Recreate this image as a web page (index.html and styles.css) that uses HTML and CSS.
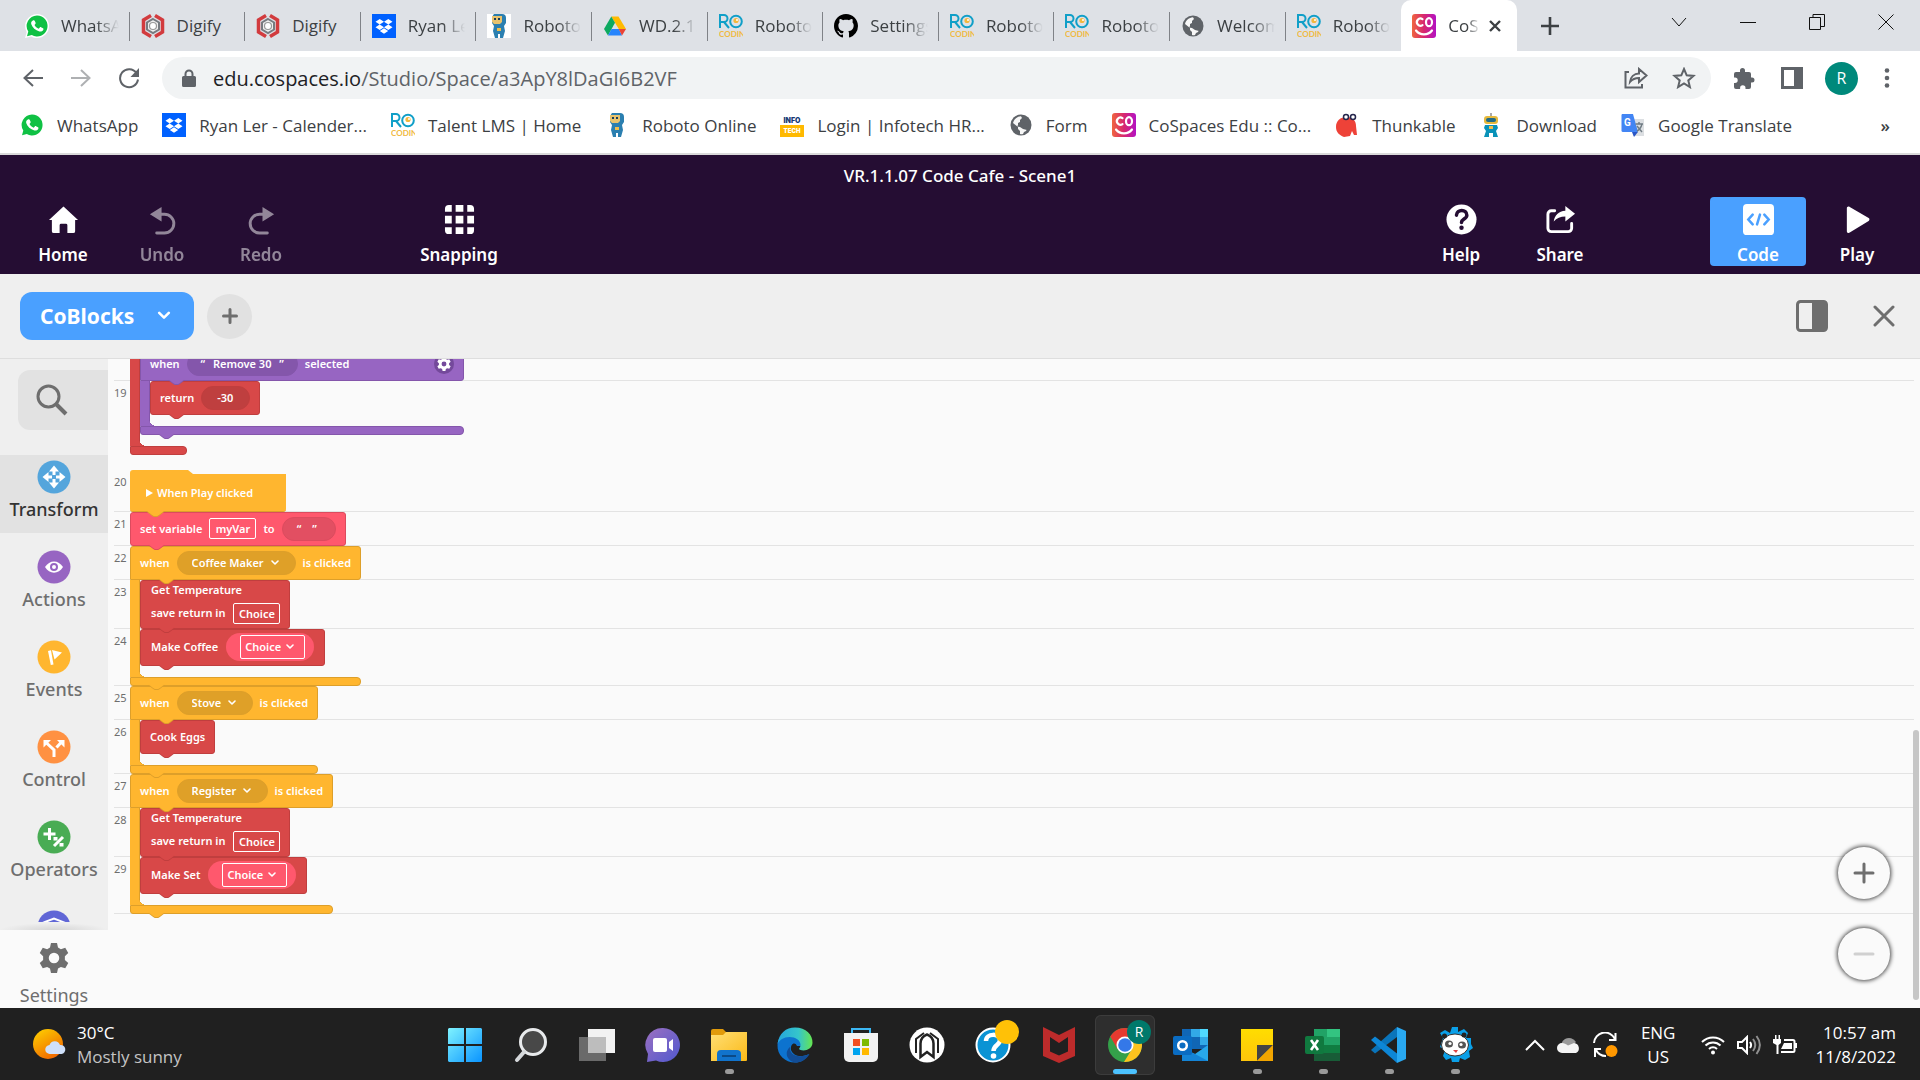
FILE: index.html
```html
<!DOCTYPE html>
<html lang="en">
<head>
<meta charset="utf-8">
<meta name="viewport" content="width=device-width, initial-scale=1">
<title>CoSpaces Edu</title>
<link rel="stylesheet" href="styles.css">
</head>
<body>
<svg class="defs" aria-hidden="true">
  <defs>
    <linearGradient id="g-co" x1="0" x2="1"><stop offset="0" stop-color="#f0653f"/><stop offset=".5" stop-color="#d7276f"/><stop offset="1" stop-color="#b312c4"/></linearGradient>
    <linearGradient id="g-sun" x1="0" y1="0" x2=".6" y2="1"><stop offset="0" stop-color="#ffd400"/><stop offset="1" stop-color="#f06a00"/></linearGradient>
    <linearGradient id="g-win" x1="0" y1="0" x2="1" y2="1"><stop offset="0" stop-color="#7ff3ff"/><stop offset="1" stop-color="#0a94ff"/></linearGradient>
    <linearGradient id="g-chat" x1="0" y1="0" x2="1" y2="1"><stop offset="0" stop-color="#9c70c0"/><stop offset="1" stop-color="#5058cf"/></linearGradient>
    <linearGradient id="g-fold" x1="0" y1="0" x2="1" y2="1"><stop offset="0" stop-color="#ffdf75"/><stop offset="1" stop-color="#fbb917"/></linearGradient>
    <linearGradient id="g-edge" x1="0" x2="1"><stop offset="0" stop-color="#25a5dc"/><stop offset=".6" stop-color="#35c5cb"/><stop offset="1" stop-color="#66e650"/></linearGradient>
    <linearGradient id="g-note" x1="0" y1="0" x2="0" y2="1"><stop offset="0" stop-color="#ffdd00"/><stop offset="1" stop-color="#ffc50b"/></linearGradient>
  </defs>
</svg>
<svg class="symbols" aria-hidden="true">
  <symbol id="i-whatsapp" viewBox="0 0 24 24"><path fill="#fff" d="M12 0a12 12 0 0 1 0 24c-2 0-4-.5-5.800-1.500L0 24l1.700-6A12 12 0 0 1 12 0z"/><path fill="#0fc144" d="M12 1.500a10.500 10.500 0 1 1-5.200 19.600L2 22.300l1.300-4.700A10.500 10.500 0 0 1 12 1.500z"/><path fill="#fff" d="M8.200 6.300c.5-.3 1.200-.2 1.500.4l.9 2c.2.500 0 1-.3 1.300l-.8 1c1 1.800 2.300 3 4.200 3.800l1.100-1.300c.3-.4.8-.5 1.200-.3l2 1c.5.300.6.700.4 1.300-.5 1.700-2.400 2.400-4 2-4-1.100-7-3.900-8.200-7.500-.4-1.600.5-3 2-3.700z"/></symbol>
  <symbol id="i-digify" viewBox="0 0 24 24"><path fill="none" stroke="#d23b3e" stroke-width="3.500" d="M10 1.500 2.500 6v12l7.500 4.500M14 1.500 21.500 6v12L14 22.500"/><path fill="#eee" stroke="#777b80" stroke-width="2" d="m12 5 6 3.500v7L12 19l-6-3.500v-7z"/><circle cx="12" cy="12" r="3.500" fill="#fff" stroke="#999" stroke-width="1.200"/></symbol>
  <symbol id="i-dropbox" viewBox="0 0 24 24"><path fill="#0061ff" d="M0 0h24v24H0z"/><path fill="#fff" d="m7.700 5 4.300 2.700-4.300 2.700-4.200-2.700zm8.600 0 4.200 2.700-4.200 2.700L12 7.700zM7.700 10.500l4.300 2.700-4.300 2.700-4.200-2.700zm8.600 0 4.200 2.700-4.200 2.700-4.300-2.700zM12 14.300l4.200 2.700-4.200 2.700L7.800 17z"/></symbol>
  <symbol id="i-robot" viewBox="0 0 24 24"><path fill="#2b7fb0" d="M7 0h8a4 4 0 0 1 4 4v5l-2 3H7L5 9V3z"/><path fill="#e8c36e" d="M5 2h10v6l-2 2H7L5 8z"/><path fill="#183d58" d="M7 4h2v2H7zm4 0h2v2h-2z"/><path fill="#2b7fb0" d="M7 12h10l1 5-2 7h-3v-4h-2v4H8l-2-7z"/><path fill="#f0be4c" d="M10 14h4v3h-4z"/></symbol>
  <symbol id="i-robot2" viewBox="0 0 24 24"><path stroke="#555" d="M12 0v4"/><rect x="5" y="3" width="14" height="8" rx="3" fill="#e6b93c"/><rect x="7" y="5" width="10" height="4" rx="2" fill="#246b85"/><path fill="#0992b8" d="M6 12h12l1 3-2 3 2 6h-5v-4h-4v4H5l2-6-2-3z"/><path fill="#f0be4c" d="M10 13h4v3h-4z"/></symbol>
  <symbol id="i-drive" viewBox="0 0 24 24"><path fill="#ffba00" d="M8.300 2.500h7.200L23 15h-7.200z"/><path fill="#0da960" d="M8.300 2.500 12 8.800 5 21.500 1 15z"/><path fill="#2684fc" d="M8.500 15h7.300l3.200 6.500H5z"/><path fill="#ea4335" d="M15.700 15H23l-4 6.500z"/></symbol>
  <symbol id="i-ro" viewBox="0 0 24 24"><path fill="none" stroke="#109fc8" stroke-width="2" d="M1 14V1h4a3.500 3.500 0 0 1 0 7H1m4 0 5 6"/><circle cx="17" cy="7.500" r="5.800" fill="none" stroke="#109fc8" stroke-width="2"/><circle cx="17" cy="6.500" r="2.600" fill="#f3b83d"/><circle cx="18" cy="6" r="1" fill="#fff"/><text x="0" y="23" font-family="Lato, sans-serif" font-size="8" font-weight="700" fill="#f0b93f">CODIN</text></symbol>
  <symbol id="i-github" viewBox="0 0 16 16"><path d="M8 0C3.580 0 0 3.580 0 8c0 3.540 2.290 6.530 5.470 7.590.4.070.55-.17.55-.38 0-.19-.01-.82-.01-1.490-2.010.37-2.530-.49-2.690-.94-.09-.23-.48-.94-.82-1.130-.28-.15-.68-.52-.01-.53.63-.01 1.080.58 1.230.82.720 1.210 1.870.87 2.330.66.070-.52.280-.87.510-1.070-1.780-.2-3.640-.89-3.640-3.950 0-.87.310-1.590.82-2.150-.08-.2-.36-1.020.08-2.120 0 0 .67-.21 2.200.82.640-.18 1.320-.27 2-.27s1.360.09 2 .27c1.530-1.040 2.200-.82 2.200-.82.440 1.100.16 1.920.08 2.120.51.560.82 1.270.82 2.150 0 3.070-1.870 3.750-3.650 3.950.29.250.54.730.54 1.480 0 1.070-.01 1.930-.01 2.200 0 .21.150.46.550.38A8.010 8.010 0 0 0 16 8c0-4.420-3.580-8-8-8z"/></symbol>
  <symbol id="i-globe" viewBox="0 0 24 24"><circle cx="12" cy="12" r="10.500" fill="#5f6368"/><path fill="#fff" d="M4 10c1-4 4-6.500 8-6.800l1 1.800-2 2v2l-2 1v2h3l2 2h3l1 2-1 2-2 1-1 2c-1 .3-2 .2-3 0v-3l-2-2v-2z" opacity=".95"/><path fill="#5f6368" d="m14 5 3 1v3l-3 1 1 2 4-1 1 3-2 3-4-1-3-2-3-.500z"/></symbol>
  <symbol id="i-info" viewBox="0 0 24 24"><path fill="#ffb900" d="M0 12h24v12H0z"/><text x="12" y="10" text-anchor="middle" font-family="Inter, sans-serif" font-size="7" font-weight="900" fill="#173a75">INFO</text><text x="12" y="20" text-anchor="middle" font-family="Inter, sans-serif" font-size="6" font-weight="900" fill="#fff">TECH</text></symbol>
  <symbol id="i-co" viewBox="0 0 24 24"><rect width="24" height="24" rx="3" fill="url(#g-co)"/><path fill="none" stroke="#fff" stroke-width="2.200" stroke-linecap="round" d="M10.500 5.200a3.600 3.600 0 1 0 0 6M4 16.500c4 5.200 12 5.200 16 0"/><ellipse cx="17" cy="8.200" rx="3" ry="4" fill="none" stroke="#fff" stroke-width="2.200"/></symbol>
  <symbol id="i-thunk" viewBox="0 0 24 24"><path fill="#ee4238" d="M1 14C1 8 5 4 12 4c6 0 9 4 9 9l1 9h-3l-2-4-2 5-6 1C4 22 1 19 1 14z"/><circle cx="11" cy="4" r="2.500" fill="#fff" stroke="#25264c" stroke-width="1.500"/><circle cx="18" cy="4" r="2.500" fill="#fff" stroke="#25264c" stroke-width="1.500"/></symbol>
  <symbol id="i-translate" viewBox="0 0 24 24"><path fill="#dcdfe2" d="M10 6h13v17H12z"/><path fill="#4285f4" d="M1 1h11l5 18H2a1.500 1.500 0 0 1-1.500-1.500V2z"/><path fill="#2a56c6" d="M11 19h6l-4 5z"/><text x="3" y="13" font-family="Roboto, sans-serif" font-size="10" font-weight="700" fill="#fff">G</text><path fill="none" stroke="#6f7b83" stroke-width="1.400" d="M14.500 11H22m-4-2v2m3 0c-1 4-3 6-5 7m0-5 5 6"/></symbol>
  <symbol id="i-chev" viewBox="0 0 10 6"><path fill="none" stroke="currentColor" stroke-width="1.600" stroke-linecap="round" stroke-linejoin="round" d="m2 1 3 3 3-3"/></symbol>
  <symbol id="i-gear" viewBox="0 0 24 24"><path fill="currentColor" fill-rule="evenodd" d="M9.600 0h4.800l.8 3.600 2.300 1.300L21 3.800l2.400 4.200-2.700 2.500v3l2.700 2.500L21 20.200l-3.500-1.100-2.300 1.300-.8 3.600H9.600l-.8-3.600-2.300-1.300L3 20.200.6 16l2.700-2.500v-3L.6 8 3 3.800l3.500 1.100 2.300-1.300zM12 7.800a4.200 4.200 0 1 0 0 8.400 4.200 4.200 0 0 0 0-8.400z"/></symbol>
</svg>

<header class="browser">
  <div class="tabstrip">
    <nav class="tabs" aria-label="Tabs">
      <a class="tab" href="#"><svg class="fav"><use href="#i-whatsapp"/></svg><span class="tab-label">WhatsApp</span></a>
      <a class="tab" href="#"><svg class="fav"><use href="#i-digify"/></svg><span class="tab-label whole">Digify</span></a>
      <a class="tab" href="#"><svg class="fav"><use href="#i-digify"/></svg><span class="tab-label whole">Digify</span></a>
      <a class="tab" href="#"><svg class="fav"><use href="#i-dropbox"/></svg><span class="tab-label">Ryan Ler</span></a>
      <a class="tab" href="#"><svg class="fav fav-white"><use href="#i-robot"/></svg><span class="tab-label">Roboto</span></a>
      <a class="tab" href="#"><svg class="fav"><use href="#i-drive"/></svg><span class="tab-label">WD.2.1.0</span></a>
      <a class="tab" href="#"><svg class="fav"><use href="#i-ro"/></svg><span class="tab-label">Roboto</span></a>
      <a class="tab" href="#"><svg class="fav"><use href="#i-github"/></svg><span class="tab-label">Settings</span></a>
      <a class="tab" href="#"><svg class="fav"><use href="#i-ro"/></svg><span class="tab-label">Roboto</span></a>
      <a class="tab" href="#"><svg class="fav"><use href="#i-ro"/></svg><span class="tab-label">Roboto</span></a>
      <a class="tab" href="#"><svg class="fav"><use href="#i-globe"/></svg><span class="tab-label">Welcome</span></a>
      <a class="tab" href="#"><svg class="fav"><use href="#i-ro"/></svg><span class="tab-label">Roboto</span></a>
      <div class="tab tab-active"><svg class="fav"><use href="#i-co"/></svg><span class="tab-label">CoSpaces</span><button class="tab-close" aria-label="Close tab"><svg width="14" height="14" viewBox="0 0 14 14"><path fill="none" stroke="#3c4043" stroke-width="2.400" d="m2 2 10 10M12 2 2 12"/></svg></button></div>
    </nav>
    <button class="new-tab" aria-label="New tab"><svg width="18" height="18" viewBox="0 0 18 18"><path fill="none" stroke="#3c4043" stroke-width="2.600" d="M9 0v18M0 9h18"/></svg></button>
    <div class="window-buttons">
      <button aria-label="Search tabs"><svg width="16" height="16" viewBox="0 0 16 16"><path d="m1 4 7 8 7-8"/></svg></button>
      <button aria-label="Minimise"><svg width="16" height="16" viewBox="0 0 16 16"><path d="M0 8.500h16"/></svg></button>
      <button aria-label="Restore"><svg width="16" height="16" viewBox="0 0 16 16"><path d="M.5 3.500h11v12H.5zM4 3V.5h11.500v12H12"/></svg></button>
      <button aria-label="Close"><svg width="16" height="16" viewBox="0 0 16 16"><path d="m.5.5 15 15M15.500.5l-15 15"/></svg></button>
    </div>
  </div>

  <div class="toolbar">
    <div class="nav-buttons">
      <button aria-label="Back"><svg width="22" height="20" viewBox="0 0 22 20"><path d="M21 10H3m8-8-8.500 8 8.500 8"/></svg></button>
      <button aria-label="Forward" class="dim"><svg width="22" height="20" viewBox="0 0 22 20"><path d="M1 10h18M11 2l8.500 8-8.500 8"/></svg></button>
      <button aria-label="Reload"><svg width="22" height="22" viewBox="0 0 22 22"><path d="M18.500 6A9 9 0 1 0 20 12.500"/><path class="solid" d="M21 1v9h-8.500z"/></svg></button>
    </div>
    <form class="omnibox">
      <svg width="14" height="18" viewBox="0 0 14 18"><path fill="#5f6368" d="M1.500 7h11A1.500 1.500 0 0 1 14 8.500v8a1.500 1.500 0 0 1-1.500 1.500h-11A1.500 1.500 0 0 1 0 16.500v-8A1.500 1.500 0 0 1 1.500 7z"/><path fill="none" stroke="#5f6368" stroke-width="2" d="M3.500 8V5a3.500 3.500 0 0 1 7 0v3"/></svg>
      <a class="url" href="#"><b>edu.cospaces.io</b>/Studio/Space/a3ApY8lDaGI6B2VF</a>
      <button type="button" aria-label="Share page"><svg width="24" height="22" viewBox="0 0 24 22"><path fill="none" stroke="#5f6368" stroke-width="2" d="M5 5H1.500v15.500H18V17M6 15c.5-5 4-8.500 9-8.500V2l7.500 6.500-7.500 6.500v-4C11 11 8 12.500 6 15z"/></svg></button>
      <button type="button" aria-label="Bookmark"><svg width="24" height="22" viewBox="0 0 24 22"><path fill="none" stroke="#5f6368" stroke-width="2" d="m12 2 2.700 6.300 6.800.6-5.200 4.500 1.600 6.700L12 16.500l-5.900 3.600 1.600-6.700-5.200-4.500 6.800-.6z"/></svg></button>
    </form>
    <div class="ext-buttons">
      <button aria-label="Extensions"><svg width="22" height="22" viewBox="0 0 22 22"><path fill="#5f6368" d="M7 5V3.500a2.500 2.500 0 0 1 5 0V5h4a2 2 0 0 1 2 2v3.500h1a2.500 2.500 0 0 1 0 5h-1V20a2 2 0 0 1-2 2h-3.500v-1a2.700 2.700 0 0 0-5.400 0v1H3a2 2 0 0 1-2-2v-4h1a2.700 2.700 0 0 0 0-5.400H1V7a2 2 0 0 1 2-2z"/></svg></button>
      <button aria-label="Side panel"><svg width="22" height="22" viewBox="0 0 22 22"><path fill="#5f6368" fill-rule="evenodd" d="M0 0h22v22H0zm3 3v16h10V3z"/></svg></button>
      <button aria-label="Profile" class="avatar">R</button>
      <button aria-label="Menu"><svg width="6" height="20" viewBox="0 0 6 20"><g fill="#5f6368"><circle cx="3" cy="2.500" r="2.300"/><circle cx="3" cy="10" r="2.300"/><circle cx="3" cy="17.500" r="2.300"/></g></svg></button>
    </div>
  </div>

  <nav class="bookmarks" aria-label="Bookmarks">
    <a href="#"><svg class="fav"><use href="#i-whatsapp"/></svg>WhatsApp</a>
    <a href="#"><svg class="fav"><use href="#i-dropbox"/></svg>Ryan Ler - Calender...</a>
    <a href="#"><svg class="fav"><use href="#i-ro"/></svg>Talent LMS | Home</a>
    <a href="#"><svg class="fav"><use href="#i-robot"/></svg>Roboto Online</a>
    <a href="#"><svg class="fav"><use href="#i-info"/></svg>Login | Infotech HR...</a>
    <a href="#"><svg class="fav"><use href="#i-globe"/></svg>Form</a>
    <a href="#"><svg class="fav"><use href="#i-co"/></svg>CoSpaces Edu :: Co...</a>
    <a href="#"><svg class="fav"><use href="#i-thunk"/></svg>Thunkable</a>
    <a href="#"><svg class="fav"><use href="#i-robot2"/></svg>Download</a>
    <a href="#"><svg class="fav"><use href="#i-translate"/></svg>Google Translate</a>
    <button class="more" aria-label="More bookmarks">»</button>
  </nav>
</header>

<section class="appbar">
  <h1>VR.1.1.07 Code Cafe - Scene1</h1>
  <div class="actions">
    <button class="action"><svg viewBox="0 0 32 32"><path d="M16 2.500 31 16.500h-3V28a2 2 0 0 1-2 2h-6v-8a1.500 1.500 0 0 0-1.500-1.500h-5A1.500 1.500 0 0 0 12 22v8H6a2 2 0 0 1-2-2V16.500H1z"/></svg>Home</button>
    <button class="action" disabled><svg viewBox="0 0 32 32"><path d="M3 10.500 15 3v15z"/><path class="line" d="M13 10.500h5a9.700 9.700 0 0 1 0 19.400H10"/></svg>Undo</button>
    <button class="action" disabled><svg viewBox="0 0 32 32"><path d="M29 10.500 17 3v15z"/><path class="line" d="M19 10.500h-5a9.700 9.700 0 0 0 0 19.400h8"/></svg>Redo</button>
    <button class="action after-gap"><svg viewBox="0 0 32 32"><path d="M5 1h3v7H1V5a4 4 0 0 1 4-4zm7 0h8v7h-8zm12 0h3a4 4 0 0 1 4 4v3h-7zM1 12h7v8H1zm11 0h8v8h-8zm12 0h7v8h-7zM1 24h7v7H5a4 4 0 0 1-4-4zm11 0h8v7h-8zm12 0h7v3a4 4 0 0 1-4 4h-3z"/></svg>Snapping</button>
    <span class="spacer"></span>
    <button class="action"><svg viewBox="0 0 32 32"><circle cx="16" cy="16" r="15.500"/><path fill="none" stroke="#250d33" stroke-width="3.600" stroke-linecap="round" d="M10.800 11.500c.3-6.500 10.700-6.500 10.700 0 0 4-5.500 4-5.500 7.500"/><circle cx="16" cy="24.500" r="2.300" fill="#250d33"/></svg>Help</button>
    <button class="action"><svg viewBox="0 0 32 32"><path class="line" d="M10 7H6.500A3.500 3.500 0 0 0 3 10.500V25a3.500 3.500 0 0 0 3.500 3.500H24a3.500 3.500 0 0 0 3.500-3.500v-5"/><path d="M21 2v5C14 7.500 10 12 9 18c3-3.500 7-5 12-5v5l10-8z"/></svg>Share</button>
    <button class="action action-on after-gap"><svg viewBox="0 0 32 32"><rect x="0" y="0" width="32" height="32" rx="4"/><path fill="none" stroke="#4aa0ff" stroke-width="2.600" stroke-linecap="round" d="m10 11-4.500 5 4.500 5M22 11l4.500 5-4.500 5M17.500 11l-3 10"/></svg>Code</button>
    <button class="action"><svg viewBox="0 0 32 32"><path d="M5 4.500C5 2.700 6.500 2 8 3l19.500 11.500a1.800 1.800 0 0 1 0 3L8 29.500c-1.500 1-3 0-3-1.500z"/></svg>Play</button>
  </div>
</section>

<section class="scriptbar">
  <button class="script-pick">CoBlocks<svg width="16" height="10"><use href="#i-chev"/></svg></button>
  <button class="script-add" aria-label="Add script"><svg width="16" height="16" viewBox="0 0 16 16"><path fill="none" stroke="#6e6e6e" stroke-width="3" stroke-linecap="round" d="M8 1.500v13M1.500 8h13"/></svg></button>
  <span class="spacer"></span>
  <button aria-label="Split view"><svg width="32" height="32" viewBox="0 0 32 32"><rect x="1.500" y="1.500" width="29" height="29" rx="3" fill="none" stroke="#6e6e6e" stroke-width="3"/><path fill="#6e6e6e" d="M16 1h12a3 3 0 0 1 3 3v24a3 3 0 0 1-3 3H16z"/></svg></button>
  <button aria-label="Close editor"><svg width="22" height="22" viewBox="0 0 22 22"><path fill="none" stroke="#6e6e6e" stroke-width="3" stroke-linecap="round" d="m2 2 18 18M20 2 2 20"/></svg></button>
</section>

<main class="editor">
  <aside class="palette">
    <button class="search" aria-label="Search blocks"><svg width="32" height="32" viewBox="0 0 32 32"><g fill="none" stroke="#6e6e6e"><circle cx="12.500" cy="12.500" r="10.500" stroke-width="3"/><path stroke-width="4" d="m20 20 10 10"/></g></svg></button>
    <nav class="categories" aria-label="Block categories">
      <a class="category selected" href="#"><svg viewBox="0 0 34 34"><circle cx="17" cy="17" r="16.500" fill="#54a5dc"/><path fill="#fff" d="m17 5.500 5 6h-3.500V15h-3v-3.500H12zM28.500 17l-6 5v-3.500H19v-3h3.500V12zM17 28.500l-5-6h3.500V19h3v3.500H22zM5.500 17l6-5v3.500H15v3h-3.500V22z"/></svg>Transform</a>
      <a class="category" href="#"><svg viewBox="0 0 34 34"><circle cx="17" cy="17" r="16.500" fill="#9765c2"/><path fill="#fff" d="M8 17c4.500-7.500 13.500-7.500 18 0-4.500 7.500-13.500 7.500-18 0z"/><circle cx="17" cy="17" r="3" fill="#fff" stroke="#9765c2" stroke-width="2"/></svg>Actions</a>
      <a class="category" href="#"><svg viewBox="0 0 34 34"><circle cx="17" cy="17" r="16.500" fill="#ffb62f"/><path fill="#fff" d="m11 11 3-.7 2.500 14.200-2.700.5zM15 10l10 2.500-7.500 7z"/></svg>Events</a>
      <a class="category" href="#"><svg viewBox="0 0 34 34"><circle cx="17" cy="17" r="16.500" fill="#ff9142"/><path fill="none" stroke="#fff" stroke-width="3" d="M17 27v-7l-8-7.500m10.500 5 5-5.500"/><path fill="#fff" d="M6.500 10H14l-7.500 7.500zM20 10h7.500v7.500z"/></svg>Control</a>
      <a class="category" href="#"><svg viewBox="0 0 34 34"><circle cx="17" cy="17" r="16.500" fill="#49ac54"/><path fill="none" stroke="#fff" stroke-width="3" d="M12.500 8v12M6.500 14h12m-1.500 12 9-9"/><path fill="#fff" d="M16.500 17h4v3.500h-4zm6 6h4v3.500h-4z"/></svg>Operators</a>
      <a class="category" href="#" aria-label="More blocks"><svg viewBox="0 0 34 34"><circle cx="17" cy="17" r="16.500" fill="#6066d6"/><path fill="none" stroke="#fff" stroke-width="2" d="m8 12 9-3.500 9 3.500-9 4zv9l9 4 9-4v-9"/></svg></a>
    </nav>
    <a class="settings" href="#"><svg width="30" height="30"><use href="#i-gear"/></svg>Settings</a>
  </aside>

  <section class="canvas" aria-label="Script">
    <div class="program">
      <ol class="lines" start="18">
        <li class="h34"></li>
        <li class="h89">19</li>
        <li class="h42 plain">20</li>
        <li class="h34">21</li>
        <li class="h34">22</li>
        <li class="h49">23</li>
        <li class="h57">24</li>
        <li class="h34">25</li>
        <li class="h54">26</li>
        <li class="h34">27</li>
        <li class="h49">28</li>
        <li class="h57">29</li>
        <li></li>
      </ol>

      <div class="stacks">
        <div class="stack">
          <div class="wrap red tail">
            <div class="wrap-body">
              <div class="wrap purple">
                <div class="row head wide">when <span class="pill quoted"><i>“</i><input class="bare" aria-label="Option" value="Remove 30"><i>”</i></span> selected<button class="gear" aria-label="Block options"><svg width="14" height="14"><use href="#i-gear"/></svg></button></div>
                <div class="wrap-body">
                  <div class="block row red knob">return <span class="pill"><input class="bare number" aria-label="Return value" value="-30"></span></div>
                </div>
                <div class="foot knob"></div>
              </div>
            </div>
            <div class="foot"></div>
          </div>
        </div>

        <div class="stack">
          <div class="hat-wrap yellow knob"><div class="hat"><svg width="7" height="8" viewBox="0 0 7 8"><path fill="#fff" d="M0 0v8l7-4z"/></svg>When Play clicked</div></div>
          <div class="block row pink knob">set variable <input class="field" aria-label="Variable" value="myVar"> to <span class="pill empty"><i>“</i><i>”</i></span></div>
          <div class="wrap yellow">
            <div class="row head">when <label class="pill"><select aria-label="Item"><option>Coffee Maker</option></select><svg width="10" height="6"><use href="#i-chev"/></svg></label> is clicked</div>
            <div class="wrap-body">
              <div class="block call red knob"><div>Get Temperature</div><div class="row">save return in <input class="field" aria-label="Variable" value="Choice"></div></div>
              <div class="block row tall red knob">Make Coffee <label class="value"><span class="boxed"><select aria-label="Variable"><option>Choice</option></select><svg width="10" height="6"><use href="#i-chev"/></svg></span></label></div>
            </div>
            <div class="foot knob"></div>
          </div>
          <div class="wrap yellow">
            <div class="row head">when <label class="pill"><select aria-label="Item"><option>Stove</option></select><svg width="10" height="6"><use href="#i-chev"/></svg></label> is clicked</div>
            <div class="wrap-body">
              <div class="block row red knob">Cook Eggs</div>
            </div>
            <div class="foot knob"></div>
          </div>
          <div class="wrap yellow">
            <div class="row head">when <label class="pill"><select aria-label="Item"><option>Register</option></select><svg width="10" height="6"><use href="#i-chev"/></svg></label> is clicked</div>
            <div class="wrap-body">
              <div class="block call red knob"><div>Get Temperature</div><div class="row">save return in <input class="field" aria-label="Variable" value="Choice"></div></div>
              <div class="block row tall red knob">Make Set <label class="value"><span class="boxed"><select aria-label="Variable"><option>Choice</option></select><svg width="10" height="6"><use href="#i-chev"/></svg></span></label></div>
            </div>
            <div class="foot knob"></div>
          </div>
        </div>
      </div>
    </div>
    <div class="zoom">
      <button aria-label="Zoom in"><svg width="22" height="22" viewBox="0 0 22 22"><path fill="none" stroke="#6e6e6e" stroke-width="3" stroke-linecap="round" d="M11 2v18M2 11h18"/></svg></button>
      <button aria-label="Zoom out"><svg width="22" height="22" viewBox="0 0 22 22"><path fill="none" stroke="#d0d0d0" stroke-width="3" stroke-linecap="round" d="M2 11h18"/></svg></button>
    </div>
    <div class="scroll-thumb"></div>
  </section>
</main>

<footer class="taskbar">
  <button class="weather"><svg width="34" height="32" viewBox="0 0 34 32"><circle cx="15" cy="15" r="15" fill="url(#g-sun)"/><path fill="#cfe0fa" d="M17 25a4.500 4.500 0 0 1-.5-9 5.500 5.500 0 0 1 10.500 0 4.500 4.500 0 0 1 1.500 9z"/></svg><span>30°C<small>Mostly sunny</small></span></button>
  <div class="apps">
    <button aria-label="Start"><svg viewBox="0 0 36 36"><path fill="url(#g-win)" d="M2 1h15v16H1V2zm17 0h15l1 1v15H19zM1 19h16v16H2l-1-1zm18 0h16v15l-1 1H19z"/></svg></button>
    <button aria-label="Search"><svg viewBox="0 0 36 36"><circle cx="20" cy="15" r="12.500" fill="#484848" stroke="#e8eaec" stroke-width="3"/><path stroke="#d5d8db" stroke-width="4" stroke-linecap="round" d="m11 25-7 8"/></svg></button>
    <button aria-label="Task view"><svg viewBox="0 0 36 36"><path fill="#f2f2f2" d="M9 2h27v24H9z"/><path fill="#6a6a6a" d="M0 10h9v16h18v8H0z"/><path fill="#bdbdbd" d="M9 10h18v16H9z"/></svg></button>
    <button aria-label="Chat"><svg viewBox="0 0 36 36"><path fill="url(#g-chat)" d="M18 1a17 17 0 1 1-7 32.500L2 35l1-8A17 17 0 0 1 18 1z"/><rect x="8" y="11" width="14" height="14" rx="2" fill="#fff"/><path fill="#fff" d="m24 15 4-3v12l-4-3z"/></svg></button>
    <button aria-label="File Explorer" class="open"><svg viewBox="0 0 36 36"><path fill="#e09a0b" d="M0 4a2 2 0 0 1 2-2h10l4 4v6H0z"/><path fill="url(#g-fold)" d="M0 8h12l3-3h21v28a1 1 0 0 1-1 1H0z"/><path fill="#1173cc" d="M6 34V27a4 4 0 0 1 4-4h16a4 4 0 0 1 4 4v7z"/><path stroke="#0b4a87" stroke-width="2" d="M11 29h14"/></svg></button>
    <button aria-label="Edge"><svg viewBox="0 0 36 36"><path fill="#0d73cf" d="M.5 18C1 8 8 5 16 8c6 2 9 6 8 11h-4c-2-5-7-2-6 4 2 6 10 8 18 4-3 6-9 8.500-14 8.500C8 35.500 0 28 .5 18z"/><path fill="#124d96" d="M13 20c-1 8 8 12 19.500 7-3 6-9 8.500-14 8.500-8-1-12-10-5.500-15.500z"/><path fill="url(#g-edge)" d="M.5 17C2 6 9 .5 18 .5 29 .5 36 8 35.500 16c-.4 6-7 8.500-12 7-3-1 0-2 0-5 0-5-5-8-11-8S2.500 13 .5 17z"/></svg></button>
    <button aria-label="Store"><svg viewBox="0 0 36 36"><path fill="none" stroke="#3cb8f5" stroke-width="2" d="M9 7V2h18v5"/><path fill="#f2f2f2" d="M1 6h34v24a5 5 0 0 1-5 5H6a5 5 0 0 1-5-5z"/><path fill="#f25022" d="M10 12h7v7h-7z"/><path fill="#7fba00" d="M19 12h7v7h-7z"/><path fill="#00a4ef" d="M10 21h7v7h-7z"/><path fill="#ffb900" d="M19 21h7v7h-7z"/></svg></button>
    <button aria-label="Control Center"><svg viewBox="0 0 36 36"><circle cx="18" cy="18" r="17.500" fill="#fff"/><path fill="none" stroke="#222" stroke-width="2" d="M15 6 7 12v14M21 6l8 6v14"/><path fill="none" stroke="#222" stroke-width="2.500" d="M18 7.500c-5 2-6.500 5-6.500 9V30l6.500-5 6.500 5V16.500c0-4-1.500-7-6.500-9z"/></svg></button>
    <button aria-label="Help"><svg viewBox="0 0 36 36"><circle cx="18" cy="18" r="16.500" fill="#0a93d4" stroke="#fff" stroke-width="2"/><path fill="none" stroke="#fff" stroke-width="4.500" d="M11 14c0-8 14-8 14-1 0 5-6.500 5-6.500 11"/><circle cx="18.500" cy="29" r="2.800" fill="#fff"/></svg><span class="badge badge-alert"></span></button>
    <button aria-label="Antivirus"><svg viewBox="0 0 36 36"><path fill="#bd2b2b" fill-rule="evenodd" d="m2 0 16 8L34 0v29l-16 7-16-7zm7 10v14.500l9 4 9-4V10l-9 6z"/></svg></button>
    <button aria-label="Chrome" class="open current"><svg viewBox="0 0 36 36"><circle cx="18" cy="18" r="17" fill="#34a04a"/><path fill="#e53a30" d="M3.300 9.500A17 17 0 0 1 32.700 9.500L33 11H18l-7.500 11z"/><path fill="#fcc31e" d="M33.500 11A17 17 0 0 1 17 35l8-13-5-11z"/><circle cx="18" cy="18" r="8.500" fill="#fff"/><circle cx="18" cy="18" r="6.800" fill="#3478e8"/></svg><span class="badge badge-user">R</span></button>
    <button aria-label="Outlook"><svg viewBox="0 0 36 36"><path fill="#1066b5" d="M9 2h26v20H9z"/><path fill="#32a9e7" d="M18 2h9v8h-9zM27 10h8v8h-8z"/><path fill="#50d9ff" d="M27 2h8v8h-8z"/><path fill="#28a8ea" d="M9 34h26V18L22 27l-13-5z"/><path fill="#1484d6" d="m9 20 26 14H9z"/><rect y="9" width="19" height="19" rx="2" fill="#0a6cc2"/><circle cx="9.500" cy="18.500" r="4.300" fill="none" stroke="#fff" stroke-width="2.500"/></svg></button>
    <button aria-label="Sticky Notes" class="open"><svg viewBox="0 0 36 36"><path fill="url(#g-note)" d="M2 2h32v16L19 34H2z"/><path fill="#444" d="M18 18h16L18 34z"/><path fill="#f2a500" d="M34 18v16H18z"/></svg></button>
    <button aria-label="Excel" class="open"><svg viewBox="0 0 36 36"><path fill="#21a366" d="M9 2h26v32H9z"/><path fill="#33c481" d="M22 2h13v8H22z"/><path fill="#107c41" d="M9 18h26v8H9z"/><path fill="#185c37" d="M9 26h26v8H9z"/><rect y="9" width="19" height="18" rx="2" fill="#10793f"/><path stroke="#fff" stroke-width="2.600" d="m6 13 7 10m0-10L6 23"/></svg></button>
    <button aria-label="Code editor" class="open"><svg viewBox="0 0 36 36"><path fill="#0a74ba" d="M26 0v10L4 26.500 0 23z"/><path fill="#0d86d6" d="m4 9.500 22 17V36L0 13z"/><path fill="#29a9f2" d="m26 0 9 4v28l-9 4z"/></svg></button>
    <button aria-label="mBlock" class="open"><svg viewBox="0 0 36 36"><path fill="#0ba0e8" d="M15 0h6v5l6-3 4 4-2 5h5v6l2 4-4 3 1 6-5 3-5-2-1 4h-7l-1-4-5 2-3-4 2-6-5-3 2-6 1-3-3-5 5-3 5 3z"/><ellipse cx="18" cy="18" rx="13.500" ry="11" fill="#fff" stroke="#333"/><circle cx="7.500" cy="9" r="2.500" fill="#222"/><circle cx="27" cy="8" r="2.500" fill="#222"/><ellipse cx="12" cy="17" rx="4" ry="3.500" fill="#555"/><ellipse cx="25" cy="18" rx="4" ry="3.500" fill="#555"/><circle cx="13" cy="16.500" r="1.600" fill="#fff"/><circle cx="24" cy="17.500" r="1.600" fill="#fff"/><path fill="#d44" d="M16 23h5l-2 3z"/></svg></button>
  </div>
  <div class="tray">
    <button aria-label="Hidden icons"><svg width="20" height="12" viewBox="0 0 20 12"><path class="tl" d="m1 11 9-9 9 9"/></svg></button>
    <button aria-label="OneDrive"><svg width="24" height="16" viewBox="0 0 24 16"><path fill="#9a9a9a" d="M5 13A7.500 7.500 0 0 1 19 5l-8 8z"/><path fill="#f4f4f4" d="M5 16a5 5 0 0 1 0-10c2 0 4 1 6 2.500L17 6a5.300 5.300 0 0 1 2 10z"/></svg></button>
    <button aria-label="Sync"><svg width="26" height="26" viewBox="0 0 26 26"><path class="tl" d="M1 11A11 11 0 0 1 22 7M22.500 1v7H16M13 24A11 11 0 0 1 3 18m-1 7v-8h6"/><circle cx="18.500" cy="19" r="6" fill="#ff9800"/></svg></button>
    <button class="lang">ENG<br>US</button>
    <button aria-label="Wi-Fi"><svg width="24" height="20" viewBox="0 0 24 20"><path class="tl" stroke-width="2" d="M1 7a15.500 15.500 0 0 1 22 0M4.500 10.500a10.600 10.600 0 0 1 15 0M8 14a5.700 5.700 0 0 1 8 0"/><circle cx="12" cy="17.500" r="2" fill="#fff"/></svg></button>
    <button aria-label="Volume"><svg width="24" height="20" viewBox="0 0 24 20"><path class="tl" d="M1 7h4l5-5v16l-5-5H1zM13 7c1.500 2 1.500 4 0 6"/><path class="tl" opacity=".5" d="M16 4c3 4 3 8 0 12m3.500-15c4.500 6 4.500 12 0 18"/></svg></button>
    <button aria-label="Battery"><svg width="24" height="20" viewBox="0 0 24 20"><path class="tl" d="M11 5h9a1.500 1.500 0 0 1 1.500 1.500v9a1.500 1.500 0 0 1-1.500 1.500H8"/><path fill="#fff" d="M11 8h8v6H8zM22 8h2v5h-2zM0 4h2V0h1.500v4h2V0H7v4h1v4L5.500 10v9H3.500v-9L0 8z"/></svg></button>
    <button class="clock">10:57 am<br>11/8/2022</button>
  </div>
</footer>
</body>
</html>
```
FILE: styles.css
```css
* { box-sizing: border-box; }

body {
  margin: 0;
  min-height: 100vh;
  display: flex;
  flex-direction: column;
  font-family: "Noto Sans", sans-serif;
  background: #fafafa;
}

button, input, select {
  font: inherit;
  color: inherit;
  margin: 0;
  padding: 0;
  border: 0;
  background: none;
}

a { color: inherit; text-decoration: none; }
svg { display: block; flex: none; }
.defs { position: absolute; width: 0; height: 0; }
.symbols { display: none; }
.spacer { flex: 1; }

/* Browser chrome */
.browser {
  font-family: "Open Sans", sans-serif;
  font-size: 17px;
  color: #3c4043;
  background: #fff;
  border-bottom: 2px solid #dadada;
}

.fav { width: 24px; height: 24px; }
.fav-white { background: #fff; }

.tabstrip {
  display: flex;
  align-items: center;
  height: 51px;
  padding-left: 14px;
  background: #dee1e6;
}

.tabs { display: flex; flex: 1; min-width: 0; height: 51px; }

.tab {
  display: flex;
  flex: 1 1 0;
  align-items: center;
  gap: 12px;
  min-width: 0;
  padding: 0 11px;
  position: relative;
}

.tab:not(.tab-active)::after {
  content: "";
  position: absolute;
  right: 0;
  top: 12px;
  width: 1px;
  height: 29px;
  background: #7f8287;
}

.tab:nth-last-child(2)::after { display: none; }

.tab-label {
  flex: 1;
  overflow: hidden;
  white-space: nowrap;
  mask-image: linear-gradient(to right, #000 60%, transparent 100%);
}

.tab-label.whole { mask-image: none; }

.tab-active { background: #fff; border-radius: 10px 10px 0 0; }
.tab-close { padding: 4px; margin-left: -8px; }

.new-tab { margin: 0 81px 0 20px; padding: 4px; }

.window-buttons { display: flex; flex: none; padding-bottom: 8px; }
.window-buttons button { width: 69px; height: 32px; display: grid; place-items: center; }
.window-buttons svg { fill: none; stroke: #111; }

.toolbar {
  display: flex;
  align-items: center;
  height: 54px;
}

.nav-buttons { display: flex; width: 162px; padding-left: 22px; gap: 26px; align-items: center; }
.nav-buttons svg { fill: none; stroke: #5f6368; stroke-width: 2; }
.nav-buttons .solid { fill: #5f6368; stroke: none; }
.nav-buttons .dim { opacity: .5; }

.omnibox {
  flex: 1;
  display: flex;
  align-items: center;
  gap: 24px;
  height: 42px;
  padding: 0 15px 0 20px;
  border-radius: 21px;
  background: #f1f3f4;
}

.url { flex: 1; margin-left: -7px; font-size: 20px; color: #5f6368; }
.url b { font-weight: 400; color: #202124; }

.ext-buttons { display: flex; align-items: center; gap: 26px; padding: 0 30px 0 22px; }

.avatar {
  width: 33px;
  height: 33px;
  margin: 0 0 0 -4px;
  border-radius: 50%;
  color: #fff;
  font-size: 16px;
  background: #00897b;
}

.bookmarks { display: flex; align-items: center; gap: 24px; height: 48px; padding: 0 30px 8px 20px; }
.bookmarks a { display: flex; align-items: center; gap: 13px; white-space: nowrap; }
.bookmarks .more { margin-left: auto; font-weight: 600; }

/* Studio header */
.appbar { height: 119px; color: #fff; background: #250d33; }

.appbar h1 {
  margin: 0;
  padding-top: 9px;
  font-size: 17px;
  line-height: 24px;
  font-weight: 500;
  text-align: center;
}

.actions { display: flex; gap: 3px; padding: 9px 15px 0; }

.action {
  display: flex;
  flex-direction: column;
  align-items: center;
  gap: 8px;
  width: 96px;
  height: 69px;
  padding-top: 7px;
  border-radius: 4px;
  font-size: 17px;
  line-height: 24px;
  font-weight: 600;
}

.action svg { width: 31px; height: 31px; fill: #fff; }
.action .line { fill: none; stroke: #fff; stroke-width: 3; stroke-linecap: round; }
.action:disabled { opacity: .5; }
.action-on { background: #4aa0ff; }
.after-gap { margin-left: 99px; }

.scriptbar {
  display: flex;
  align-items: center;
  gap: 13px;
  height: 85px;
  padding: 0 25px 0 20px;
  border-bottom: 1px solid #dedede;
  background: #efefef;
}

.scriptbar > button:last-child { margin-left: 32px; }

.script-pick {
  display: flex;
  align-items: center;
  justify-content: space-between;
  width: 174px;
  height: 48px;
  padding: 0 22px 0 20px;
  border-radius: 12px;
  color: #fff;
  font-size: 21px;
  font-weight: 700;
  background: #4aa0ff;
}

.script-add {
  display: grid;
  place-items: center;
  width: 45px;
  height: 45px;
  border-radius: 50%;
  background: #e1e1e1;
}

/* Editor */
.editor { flex: 1; display: flex; min-height: 0; }

.palette {
  display: flex;
  flex-direction: column;
  width: 108px;
  flex: none;
  color: #6e6e6e;
  font-size: 18px;
  line-height: 24px;
  font-weight: 500;
  background: #efefef;
}

.search {
  height: 60px;
  margin: 11px 0 0 18px;
  padding-left: 18px;
  border-radius: 12px 0 0 12px;
  background: #e2e2e2;
}

.categories {
  flex: 1 1 0;
  display: flex;
  flex-direction: column;
  gap: 12px;
  margin: 25px 0 8px;
  overflow: hidden;
}

.category {
  display: flex;
  flex: none;
  flex-direction: column;
  align-items: center;
  gap: 3px;
  height: 78px;
  padding-top: 5px;
}

.category svg { width: 34px; height: 34px; }
.selected { color: #333; background: #e2e2e2; }

.settings {
  display: flex;
  flex-direction: column;
  align-items: center;
  gap: 10px;
  height: 78px;
  padding-top: 13px;
  font-weight: 400;
  background: #fafafa;
  position: relative;
}

.settings::before {
  content: "";
  position: absolute;
  left: 0;
  right: 0;
  top: -7px;
  height: 7px;
  background: radial-gradient(ellipse 54px 7px at 50% 100%, #d6d6d6, #efefef);
}

.canvas { flex: 1; overflow: hidden; position: relative; background: #fafafa; }

.program { display: grid; margin-top: -13px; }
.lines, .stacks { grid-area: 1 / 1; }

.lines {
  margin: 0 6px;
  padding: 0;
  list-style: none;
  color: #6e6e6e;
  font-size: 11px;
  line-height: 23px;
}

.lines li { border-top: 1px solid #e3e3e3; }
.lines .plain { border-color: transparent; }
.h34 { height: 34px; }
.h42 { height: 42px; }
.h49 { height: 49px; }
.h54 { height: 54px; }
.h57 { height: 57px; }
.h89 { height: 89px; }

.stacks {
  display: flex;
  flex-direction: column;
  gap: 15px;
  padding: 1px 0 0 22px;
  color: #fff;
  font-size: 11px;
  line-height: 16px;
  font-weight: 600;
  white-space: nowrap;
}

/* Blocks */
.red { --fill: #d84848; --edge: #c03e3e; --slot: #bf3f3f; }
.purple { --fill: #9765c2; --edge: #8456ab; --slot: #8456ab; }
.yellow { --fill: #ffb62f; --edge: #dd9f2a; --slot: #dfa028; }
.pink { --fill: #ff586d; --edge: #dc4b5e; --slot: #e24f62; }

.block, .head, .foot {
  position: relative;
  border: 1px solid var(--edge);
  border-radius: 3px;
  background: var(--fill);
}

.block, .hat-wrap, .wrap { width: fit-content; }
.row { display: flex; align-items: center; gap: 7px; }
.block.row, .head { height: 34px; padding: 0 9px 1px 9px; }
.block.tall { height: 37px; padding: 0 10px 1px 10px; gap: 8px; }
.head { border-bottom-left-radius: 0; }
.head.wide { width: 324px; }

.block.call { height: 49px; padding: 1px 9px 0 10px; }
.block.call .row { height: 30px; gap: 8px; }

.knob::before, .knob::after, .head::before, .head::after {
  content: "";
  position: absolute;
  z-index: 2;
  left: 17px;
  bottom: -5px;
  width: 17px;
  height: 5px;
  background: var(--edge);
  clip-path: polygon(0 0, 100% 0, 70% 80%, 60% 100%, 40% 100%, 30% 80%);
}

.knob::after, .head::after { bottom: -4px; background: var(--fill); }
.head::before, .head::after { left: 27px; }

.hat-wrap { position: relative; }

.hat {
  display: flex;
  align-items: center;
  gap: 4px;
  width: 156px;
  height: 42px;
  padding: 4px 0 0 16px;
  border-radius: 3px;
  border-bottom: 1px solid var(--edge);
  background: var(--fill);
  clip-path: polygon(0 0, 58px 0, 63px 4px, 100% 4px, 100% 100%, 0 100%);
}

.wrap-body {
  position: relative;
  padding-bottom: 11px;
  border-left: 9px solid var(--fill);
  box-shadow: inset 1px 0 var(--edge);
  padding-left: 1px;
}

.wrap-body::after {
  content: "";
  position: absolute;
  left: 0;
  bottom: 0;
  width: 5px;
  height: 5px;
  background: radial-gradient(circle at 100% 0, transparent 4px, var(--edge) 4px, var(--fill) 5px);
}

.foot { height: 9px; border-radius: 0 4px 4px 3px; }
.tail > .foot { width: 57px; }

.pill {
  display: flex;
  align-items: center;
  gap: 5px;
  height: 24px;
  padding: 0 15px 0 14px;
  border: 1px solid var(--edge);
  border-radius: 12px;
  background: var(--slot);
}

.pill i { font-style: normal; }
.quoted { padding: 0 13px; }
.empty { width: 54px; gap: 11px; padding: 0 14px; }
.bare { width: 64px; text-align: center; }
.bare.number { width: 18px; overflow: visible; }
select { appearance: none; line-height: 16px; }

.field {
  width: 47px;
  height: 21px;
  border: 1px solid #fff;
  border-radius: 2px;
  text-align: center;
}

.value { display: flex; align-items: center; height: 28px; padding: 0 9px 0 14px; border-radius: 14px; background: #ff586d; }
.boxed { display: flex; align-items: center; gap: 4px; width: 65px; height: 24px; padding-left: 4px; border: 1px solid #fff; border-radius: 2px; }

.gear { display: grid; place-items: center; width: 20px; height: 20px; margin-left: auto; border-radius: 50%; background: #74499b; }

.zoom { position: absolute; right: 30px; bottom: 28px; display: grid; gap: 29px; }

.zoom button {
  display: grid;
  place-items: center;
  width: 52px;
  height: 52px;
  border-radius: 50%;
  background: #fafafa;
  box-shadow: 0 0 4px 1px #444;
}

.scroll-thumb { position: absolute; right: 1px; bottom: 8px; width: 6px; height: 270px; border-radius: 3px; background: #c6c6c6; }

/* Taskbar */
.taskbar {
  display: grid;
  grid-template-columns: 1fr auto 1fr;
  align-items: center;
  height: 72px;
  padding-top: 2px;
  color: #fff;
  font-family: "Open Sans", sans-serif;
  font-size: 17px;
  line-height: 24px;
  background: #202020;
}

.weather { display: flex; align-items: center; gap: 10px; padding-left: 33px; text-align: left; }
.weather small { display: block; font-size: 17px; color: #c4c4c4; }

.apps { display: flex; gap: 6px; }
.apps button { position: relative; display: grid; place-items: center; width: 60px; height: 60px; border-radius: 6px; }
.apps svg { width: 36px; height: 36px; }
.current { background: #2e2e2e; box-shadow: inset 0 0 0 1px #3c3c3c; }

.open::after {
  content: "";
  position: absolute;
  bottom: 1px;
  width: 9px;
  height: 5px;
  border-radius: 3px;
  background: #9a9a9a;
}

.open.current::after { width: 24px; background: #4cc2ff; }

.badge { position: absolute; right: 4px; top: 5px; width: 24px; height: 24px; border-radius: 50%; font-size: 14px; line-height: 24px; }
.badge-alert { background: #ffc107; }
.badge-user { background: #00796b; }

.tray { display: flex; align-items: center; justify-content: flex-end; gap: 12px; padding-right: 24px; }
.tl { fill: none; stroke: #fff; stroke-width: 2; }
.lang { padding: 0 14px 0 10px; }
.clock { text-align: right; margin-left: 6px; }
```
